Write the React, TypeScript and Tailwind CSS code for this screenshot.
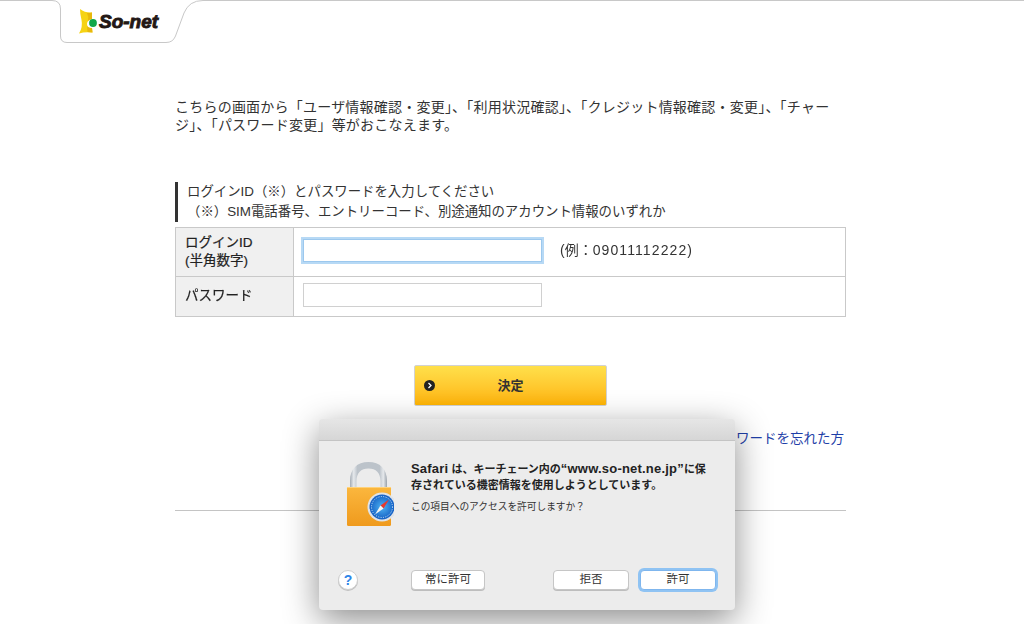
const fontStack = "font-['Liberation_Sans','Noto_Sans_CJK_JP',sans-serif]";

function Logo() {
  return (
    <div className="absolute left-[78px] top-[8px] flex items-center">
      <svg width="21" height="26" viewBox="0 0 21 26" className="shrink-0">
        <path d="M2 1 Q7 5 14 4.5 L14 11 Q9 12 9 16 Q9 20 14 20 L14.5 24.5 Q7 23.5 1 25.5 Q5 19 3.5 12 Q2 6 2 1Z" fill="#f6d313" />
        <path d="M9 5 Q11.5 5 14 4.5 L14 11 Q11 11.5 10 13 Q11 9 9 5Z" fill="#e8b80b" />
        <path d="M9 18 Q10 20 14 20 L14.5 24.5 Q12 24 9.5 24Z" fill="#e8b80b" />
        <circle cx="15" cy="15" r="3.9" fill="#12a84a" />
      </svg>
      <span className="text-[19px] font-bold italic leading-none text-[#231815] [-webkit-text-stroke:0.9px_#231815]">
        So-net
      </span>
    </div>
  );
}

function Header() {
  return (
    <header className="relative h-[44px]">
      <svg width="1024" height="44" viewBox="0 0 1024 44" fill="none">
        <path
          d="M0 0.5 H52 Q60.5 0.5 60.5 9 V36 Q60.5 42.5 67 42.5 H166 Q173 42.5 175.5 36 L184 13 Q189 0.5 203 0.5 H1024"
          stroke="#c8c8c8"
        />
      </svg>
      <Logo />
    </header>
  );
}

function LoginTable() {
  return (
    <div className="mt-[5px] grid grid-cols-[118px_1fr] border-t border-l border-[#c9c9c9] text-[14px] text-[#333]">
      <div className="flex h-[49px] items-center border-r border-b border-[#c9c9c9] bg-[#f0f0f0] pb-[1px] pl-[9px] text-[13.5px] leading-[18px] text-[#222] [-webkit-text-stroke:0.2px_#222]">
        <div>
          ログインID
          <br />
          (半角数字)
        </div>
      </div>
      <div className="flex h-[49px] items-center border-r border-b border-[#c9c9c9] pb-[4px] pl-[9px]">
        <input
          autoFocus
          className="h-[23px] w-[239px] border border-[#9cc8ee] bg-white shadow-[0_0_0_2px_#b7d9f5] outline-none"
        />
        <span className="ml-[18px]">
          (例：<span className="tracking-[1.1px]">09011112222)</span>
        </span>
      </div>
      <div className="flex h-[40px] items-center border-r border-b border-[#c9c9c9] bg-[#f0f0f0] pl-[9px] text-[13.5px] text-[#222] [-webkit-text-stroke:0.2px_#222]">
        パスワード
      </div>
      <div className="flex h-[40px] items-center border-r border-b border-[#c9c9c9] pb-[3px] pl-[9px]">
        <input className="h-[24px] w-[239px] border border-[#d0d0d0] bg-white outline-none" />
      </div>
    </div>
  );
}

function LockIcon() {
  return (
    <svg width="48" height="66" viewBox="0 0 48 66" className="shrink-0">
      <defs>
        <linearGradient id="shackle" x1="0" y1="0" x2="1" y2="0">
          <stop offset="0" stopColor="#a3abb4" />
          <stop offset="0.1" stopColor="#e6e9ec" />
          <stop offset="0.2" stopColor="#bcc3ca" />
          <stop offset="0.8" stopColor="#bcc3ca" />
          <stop offset="0.9" stopColor="#e6e9ec" />
          <stop offset="1" stopColor="#9aa2ab" />
        </linearGradient>
        <linearGradient id="body" x1="0" y1="0" x2="0" y2="1">
          <stop offset="0" stopColor="#fbb73e" />
          <stop offset="1" stopColor="#ef9a1d" />
        </linearGradient>
        <radialGradient id="dial">
          <stop offset="0" stopColor="#4eb2f2" />
          <stop offset="1" stopColor="#1560c4" />
        </radialGradient>
      </defs>
      <path
        d="M4 27 V20 C4 8 11 1 22.5 1 C34 1 41 8 41 20 V27 H34.5 V20 C34.5 12 30 7.5 22.5 7.5 C15 7.5 10.5 12 10.5 20 V27Z"
        fill="url(#shackle)"
      />
      <rect x="1" y="26" width="44" height="39" rx="1.5" fill="url(#body)" />
      <rect x="1" y="26" width="44" height="1" fill="#ffd27a" />
      <circle cx="36" cy="46" r="14.5" fill="#dfe3e8" />
      <circle cx="36" cy="46" r="12.5" fill="url(#dial)" />
      <circle cx="36" cy="46" r="10.5" fill="none" stroke="#cfe6fb" strokeWidth="1" strokeDasharray="1 1.4" />
      <path d="M43 38.5 L37.5 47.5 L34.5 44.5Z" fill="#e8392c" />
      <path d="M29 53.5 L34.5 44.5 L37.5 47.5Z" fill="#f5f5f5" />
    </svg>
  );
}

function SheetButton({ label, focused = false, width }: { label: string; focused?: boolean; width: string }) {
  return (
    <button
      className={`flex h-[20px] items-center justify-center rounded-[4px] bg-white text-[11.5px] text-[#333] ${width} ${
        focused
          ? "border border-[#7fb6ee] shadow-[0_0_0_2px_#8fc3f3]"
          : "border border-[#c6c6c6] shadow-[0_1px_0_#bdbdbd]"
      }`}
    >
      {label}
    </button>
  );
}

function KeychainDialog() {
  return (
    <div className="absolute left-[319px] top-[419px] flex h-[191px] w-[416px] flex-col overflow-hidden rounded-[4px] bg-[#ececec] shadow-[0_10px_35px_rgba(0,0,0,0.45)]">
      <div className="h-[22px] border-b border-[#c4c4c4] bg-gradient-to-b from-[#e6e6e6] to-[#d6d6d6]" />
      <div className="flex flex-1 pl-[27px] pt-[20px]">
        <LockIcon />
        <div className="ml-[17px] w-[310px]">
          <p className="whitespace-nowrap text-[11px] font-bold leading-[16px] text-[#222] [text-spacing-trim:space-all]">
            <span className="text-[13px] tracking-[0.2px]">Safari</span> は、キーチェーン内の
            <span className="text-[13px] tracking-[0.2px]">“www.so-net.ne.jp”</span>に保
            <br />
            存されている機密情報を使用しようとしています。
          </p>
          <p className="mt-[7px] text-[9.7px] leading-[14px] text-[#333]">この項目へのアクセスを許可しますか？</p>
        </div>
      </div>
      <div className="flex items-center pb-[20px] pl-[19px]">
        <div className="flex h-[20px] w-[20px] items-center justify-center rounded-full border border-[#cfcfcf] bg-white text-[14px] font-bold text-[#2f86e8] shadow-[0_1px_0_#c0c0c0]">
          ?
        </div>
        <div className="ml-[53px]">
          <SheetButton label="常に許可" width="w-[74px]" />
        </div>
        <div className="ml-[68px]">
          <SheetButton label="拒否" width="w-[76px]" />
        </div>
        <div className="ml-[11px]">
          <SheetButton label="許可" focused width="w-[76px]" />
        </div>
      </div>
    </div>
  );
}

export default function App() {
  return (
    <div className={`relative h-[624px] w-[1024px] overflow-hidden bg-white ${fontStack}`}>
      <Header />
      <main className="ml-[175px] w-[671px] text-[#333]">
        <p className="mt-[54px] w-[665px] text-[14px] leading-[18px] tracking-[0.22px]">
          こちらの画面から「ユーザ情報確認・変更」、「利用状況確認」、「クレジット情報確認・変更」、「チャージ」、「パスワード変更」等がおこなえます。
        </p>
        <div className="mt-[48px] border-l-[3px] border-[#333] pl-[9px] text-[13.4px] leading-[20px] [text-spacing-trim:space-all]">
          ログインID（※）とパスワードを入力してください
          <br />
          （※）SIM電話番号、エントリーコード、別途通知のアカウント情報のいずれか
        </div>
        <LoginTable />
        <div className="mt-[48px] flex justify-center">
          <button className="relative flex h-[41px] w-[193px] items-center justify-center rounded-[2px] border border-[#d2d2d2] bg-gradient-to-b from-[#ffe04a] to-[#ffb400] text-[13px] font-bold text-[#333]">
            <svg width="11" height="11" viewBox="0 0 11 11" className="absolute left-[9px] top-[14px]">
              <circle cx="5.5" cy="5.5" r="5.5" fill="#222" />
              <path d="M4.5 3 L7 5.5 L4.5 8" fill="none" stroke="#fff" strokeWidth="1.3" />
            </svg>
            決定
          </button>
        </div>
        <div className="mt-[24px] pr-[2px] text-right text-[13.5px] leading-[18px] text-[#1f3fa8]">パスワードを忘れた方</div>
        <hr className="mt-[62px] border-[#c4c4c4]" />
      </main>
      <KeychainDialog />
    </div>
  );
}
